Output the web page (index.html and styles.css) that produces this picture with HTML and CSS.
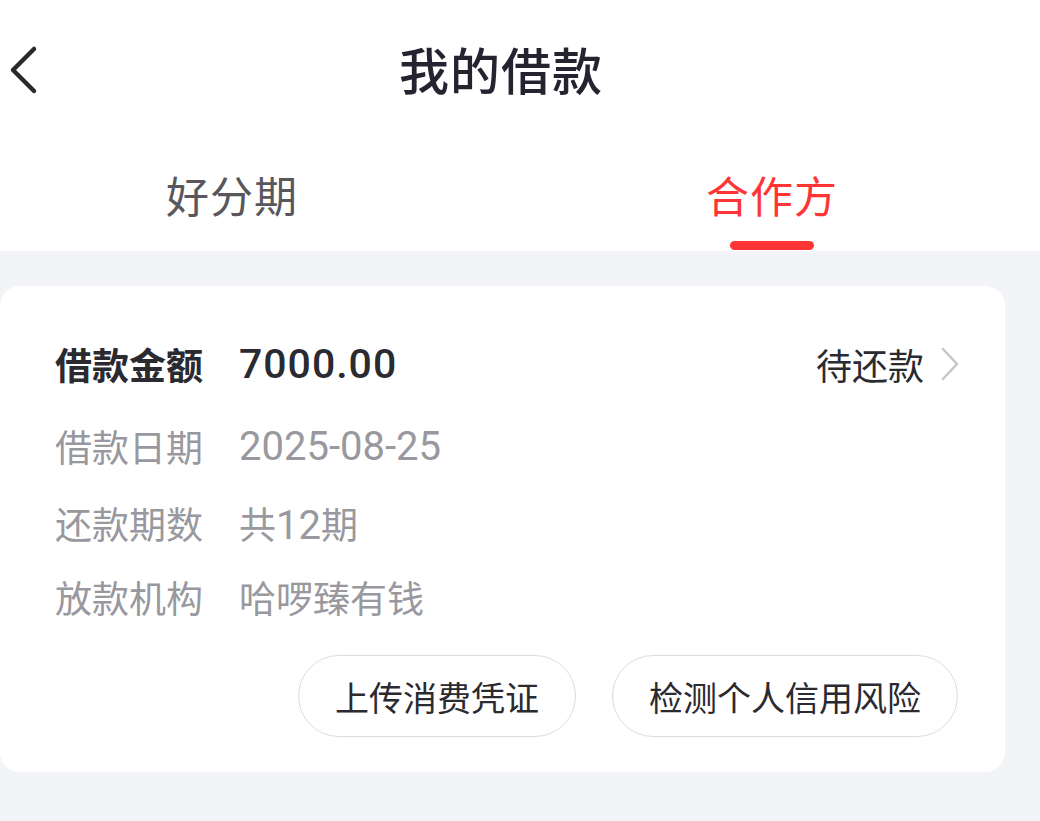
FILE: index.html
```html
<!DOCTYPE html>
<html lang="zh-CN">
<head>
    <meta charset="UTF-8">
    <meta name="viewport" content="width=device-width, initial-scale=1.0">
    <title>我的借款</title>
    <link rel="stylesheet" href="styles.css">
</head>
<body>

    <div class="header">
        <svg class="back" width="30" height="50" viewBox="0 0 30 50">
            <path d="M26 4 L5 25 L26 46" fill="none" stroke="#2a2a2e" stroke-width="4.5" stroke-linecap="round" stroke-linejoin="round"/>
        </svg>
        <h1>我的借款</h1>
    </div>

    <div class="tabs">
        <div class="tab"><span>好分期</span></div>
        <div class="tab active"><span>合作方</span></div>
    </div>

    <div class="content">
        <div class="card">
            <div class="row main">
                <span class="label">借款金额</span>
                <span class="amount">7000.00</span>
                <span class="status">待还款
                    <svg width="20" height="36" viewBox="0 0 20 36">
                        <path d="M3 3 L17 18 L3 33" fill="none" stroke="#c4c5cc" stroke-width="2.5" stroke-linecap="round" stroke-linejoin="round"/>
                    </svg>
                </span>
            </div>
            <div class="row">
                <span class="label">借款日期</span>
                <span class="value num">2025-08-25</span>
            </div>
            <div class="row">
                <span class="label">还款期数</span>
                <span class="value">共<span class="num">12</span>期</span>
            </div>
            <div class="row">
                <span class="label">放款机构</span>
                <span class="value">哈啰臻有钱</span>
            </div>
            <div class="actions">
                <button>上传消费凭证</button>
                <button>检测个人信用风险</button>
            </div>
        </div>
    </div>

</body>
</html>
```

FILE: styles.css
```css
body { margin: 0; font-family: Roboto, "Noto Sans CJK SC", sans-serif; background: #f3f4f8; width: 1040px; height: 821px; overflow: hidden; }

.header { position: relative; height: 146px; background: white; display: flex; justify-content: center; align-items: flex-start; }
.header h1 { margin: 0 38px 0 0; padding-top: 40px; font-size: 50px; line-height: 66px; font-weight: 500; color: #24232f; letter-spacing: 1px; }
.back { position: absolute; left: 8px; top: 45px; }

.tabs { display: flex; background: white; height: 105px; }
.tab { flex: 1; text-align: center; font-size: 43px; line-height: 60px; padding-top: 22px; color: #58585c; }
.tab:first-child { padding-right: 76px; }
.tab:last-child { padding-right: 36px; }
.tab span { position: relative; display: inline-block; letter-spacing: 1px; }
.tab.active { color: #ff3535; }
.tab.active span::after { content: ""; position: absolute; left: 50%; margin-left: -42px; top: 73px; width: 84px; height: 9px; border-radius: 5px; background: #ff3535; }

.content { padding-top: 35px; }
.card { width: 1005px; height: 486px; background: white; border-radius: 20px; box-sizing: border-box; padding: 56px 45px 0 55px; }

.row { display: flex; align-items: center; height: 38px; margin-bottom: 39px; font-size: 37px; }
.row.main { height: 44px; margin-bottom: 41px; }
.row:nth-child(3) { margin-bottom: 36px; }
.label { width: 184px; color: #98989e; }
.main .label { color: #2a2a30; font-weight: 700; }
.value { color: #98989e; }
.value.num, .value .num { font-size: 40px; }
.amount { font-size: 41px; font-weight: 500; color: #2a2a30; letter-spacing: 1px; }
.status { margin-left: auto; display: flex; align-items: center; gap: 16px; color: #2a2a30; font-size: 36px; }

.actions { display: flex; justify-content: flex-end; gap: 36px; margin-top: 15px; padding-right: 2px; }
.actions button { height: 82px; padding: 0 36px; border: 1px solid #dcdce0; border-radius: 41px; background: white; font-family: "Noto Sans CJK SC", sans-serif; font-size: 34px; color: #2a2a30; }
```
